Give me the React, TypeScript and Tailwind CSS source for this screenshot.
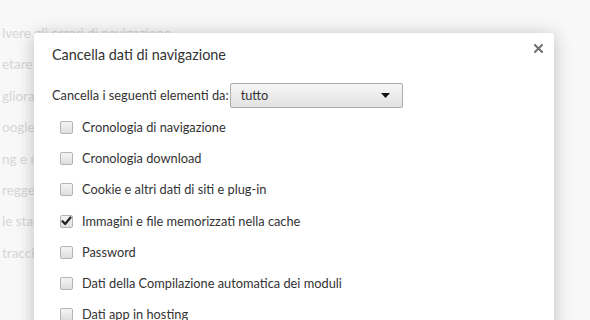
import React from "react";

const bgLines = [
  "lvere gli errori di navigazione",
  "etare i termini di ricerca",
  "gliorare il rilevamento",
  "oogle",
  "ng e malware",
  "reggere il dispositivo",
  "le statistiche",
  "tracciamento",
];

const items = [
  { label: "Cronologia di navigazione", checked: false },
  { label: "Cronologia download", checked: false },
  { label: "Cookie e altri dati di siti e plug-in", checked: false },
  { label: "Immagini e file memorizzati nella cache", checked: true },
  { label: "Password", checked: false },
  { label: "Dati della Compilazione automatica dei moduli", checked: false },
  { label: "Dati app in hosting", checked: false },
];

function Checkbox({ checked }: { checked: boolean }) {
  return (
    <div className="w-[13px] h-[13px] rounded-[2px] border border-[#b4b4b4] bg-gradient-to-b from-[#f4f4f4] to-[#dedede] flex items-center justify-center shrink-0">
      {checked && (
        <svg width="11" height="10" viewBox="0 0 11 10">
          <path d="M1.5 5.2 L4.2 8 L9.5 1.5" fill="none" stroke="#222" strokeWidth="2.2" strokeLinecap="round" strokeLinejoin="round" />
        </svg>
      )}
    </div>
  );
}

export default function App() {
  return (
    <div
      className="relative w-[590px] h-[320px] overflow-hidden bg-[#f8f8f8] text-[12.8px]"
      style={{ fontFamily: 'Lato, "Noto Sans", sans-serif' }}
    >
      <div className="flex flex-col pt-[23px] pl-[2px] text-[13.5px] text-[#d6d6d6]">
        {bgLines.map((t) => (
          <div key={t} className="h-[31.4px] leading-[20px] whitespace-nowrap">
            {t}
          </div>
        ))}
      </div>

      <div className="absolute left-[34px] top-[33px] w-[520px] h-[320px] bg-white rounded-t-[3px] shadow-[0_2px_18px_rgba(0,0,0,0.24)] text-[#333] pl-[18px]">
        <button className="absolute right-[11px] top-[11px] p-0">
          <svg width="9" height="9" viewBox="0 0 9 9">
            <path d="M1 1 L8 8 M8 1 L1 8" stroke="#6f6f6f" strokeWidth="2" strokeLinecap="square" />
          </svg>
        </button>
        <div className="pt-[12px] text-[14.4px] leading-[20px]">Cancella dati di navigazione</div>
        <div className="flex items-center mt-[18px] gap-[1px]">
          <span>Cancella i seguenti elementi da:</span>
          <div className="w-[173px] h-[25px] rounded-[2px] border border-[#acacac] bg-gradient-to-b from-[#f6f6f6] to-[#e2e2e2] flex items-center justify-between pl-[10px] pr-[12px]">
            <span>tutto</span>
            <svg width="9" height="5" viewBox="0 0 9 5">
              <path d="M0 0 H9 L4.5 5 Z" fill="#111" />
            </svg>
          </div>
        </div>
        <div className="flex flex-col mt-[4px] pl-[8px]">
          {items.map((it) => (
            <div key={it.label} className="h-[31.2px] flex items-center gap-[9px]">
              <Checkbox checked={it.checked} />
              <span className="whitespace-nowrap">{it.label}</span>
            </div>
          ))}
        </div>
      </div>
    </div>
  );
}
